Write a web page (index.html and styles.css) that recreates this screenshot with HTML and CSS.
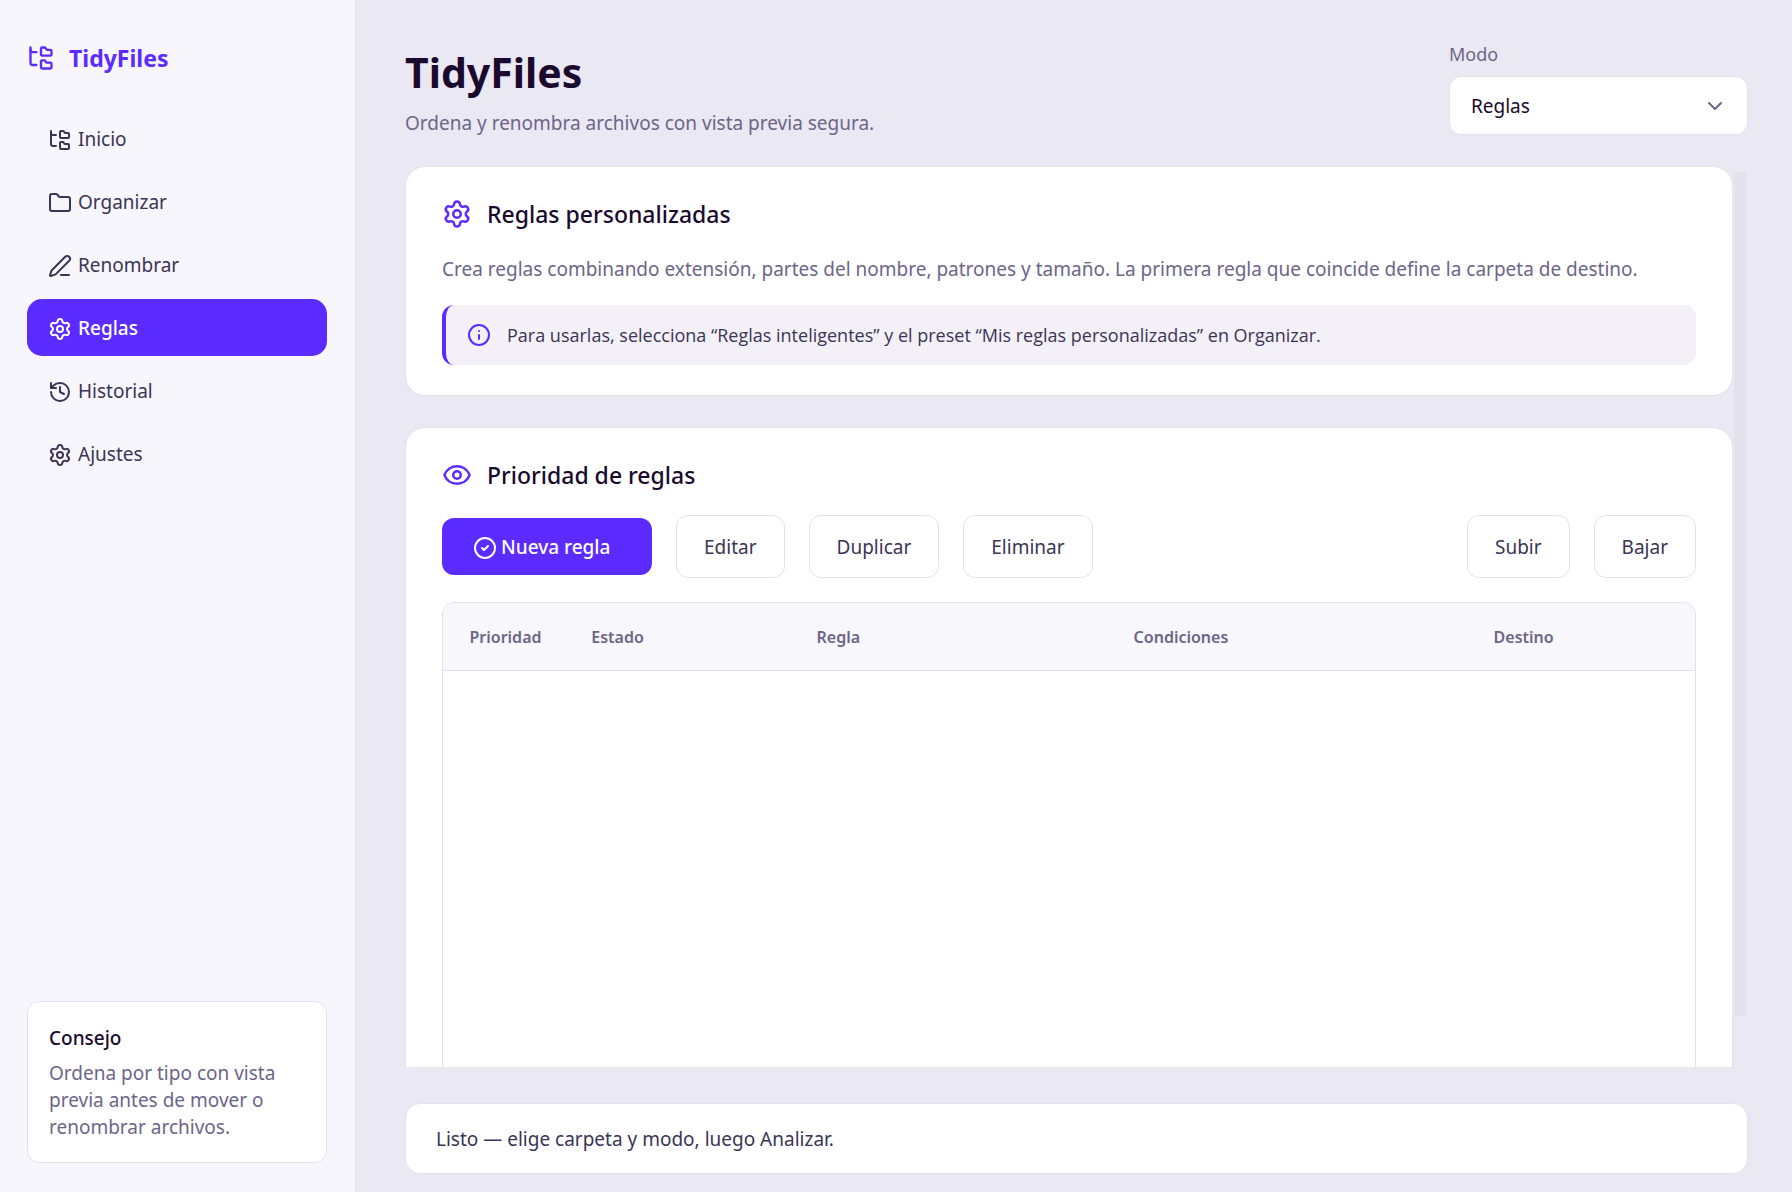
FILE: index.html
```html
<!DOCTYPE html>
<html lang="es">
<head>
<meta charset="utf-8">
<meta name="viewport" content="width=device-width, initial-scale=1">
<title>TidyFiles</title>
<link rel="stylesheet" href="styles.css">
</head>
<body>
<svg class="sprite" aria-hidden="true">
  <symbol id="tree" viewBox="0 0 24 24"><path d="M20 10a1 1 0 0 0 1-1V6a1 1 0 0 0-1-1h-2.5a1 1 0 0 1-.8-.4l-.9-1.2A1 1 0 0 0 15 3h-2a1 1 0 0 0-1 1v5a1 1 0 0 0 1 1Z"/><path d="M20 21a1 1 0 0 0 1-1v-3a1 1 0 0 0-1-1h-2.9a1 1 0 0 1-.88-.55l-.42-.85a1 1 0 0 0-.92-.6H13a1 1 0 0 0-1 1v5a1 1 0 0 0 1 1Z"/><path d="M3 5a2 2 0 0 0 2 2h3"/><path d="M3 3v13a2 2 0 0 0 2 2h3"/></symbol>
  <symbol id="folder" viewBox="0 0 24 24"><path d="M20 20a2 2 0 0 0 2-2V8a2 2 0 0 0-2-2h-7.9a2 2 0 0 1-1.69-.9L9.6 3.9A2 2 0 0 0 7.93 3H4a2 2 0 0 0-2 2v13a2 2 0 0 0 2 2Z"/></symbol>
  <symbol id="pen" viewBox="0 0 24 24"><path d="M13 21h8"/><path d="M21.174 6.812a1 1 0 0 0-3.986-3.987L3.842 16.174a2 2 0 0 0-.5.83l-1.321 4.352a.5.5 0 0 0 .623.622l4.353-1.32a2 2 0 0 0 .83-.497z"/></symbol>
  <symbol id="gear" viewBox="0 0 24 24"><path d="M9.671 4.136a2.34 2.34 0 0 1 4.659 0 2.34 2.34 0 0 0 3.319 1.915 2.34 2.34 0 0 1 2.33 4.033 2.34 2.34 0 0 0 0 3.831 2.34 2.34 0 0 1-2.33 4.033 2.34 2.34 0 0 0-3.319 1.915 2.34 2.34 0 0 1-4.659 0 2.34 2.34 0 0 0-3.32-1.915 2.34 2.34 0 0 1-2.33-4.033 2.34 2.34 0 0 0 0-3.831A2.34 2.34 0 0 1 6.35 6.051a2.34 2.34 0 0 0 3.319-1.915"/><circle cx="12" cy="12" r="3"/></symbol>
  <symbol id="history" viewBox="0 0 24 24"><path d="M3 12a9 9 0 1 0 9-9 9.75 9.75 0 0 0-6.74 2.74L3 8"/><path d="M3 3v5h5"/><path d="M12 7v5l4 2"/></symbol>
  <symbol id="eye" viewBox="0 0 24 24"><path d="M2.062 12.348a1 1 0 0 1 0-.696 10.75 10.75 0 0 1 19.876 0 1 1 0 0 1 0 .696 10.75 10.75 0 0 1-19.876 0"/><circle cx="12" cy="12" r="3"/></symbol>
  <symbol id="info" viewBox="0 0 24 24"><circle cx="12" cy="12" r="10"/><path d="M12 16v-4"/><path d="M12 8h.01"/></symbol>
  <symbol id="check" viewBox="0 0 24 24"><circle cx="12" cy="12" r="10"/><path d="m9 12 2 2 4-4"/></symbol>
  <symbol id="chevron" viewBox="0 0 24 24"><path d="m6 9 6 6 6-6"/></symbol>
</svg>
<div class="app">
  <aside class="sidebar">
    <div class="brand"><svg class="icon icon-brand"><use href="#tree"/></svg>TidyFiles</div>
    <nav class="nav">
      <button class="nav-item" type="button"><svg class="icon"><use href="#tree"/></svg>Inicio</button>
      <button class="nav-item" type="button"><svg class="icon"><use href="#folder"/></svg>Organizar</button>
      <button class="nav-item" type="button"><svg class="icon"><use href="#pen"/></svg>Renombrar</button>
      <button class="nav-item active" type="button" aria-current="page"><svg class="icon"><use href="#gear"/></svg>Reglas</button>
      <button class="nav-item" type="button"><svg class="icon"><use href="#history"/></svg>Historial</button>
      <button class="nav-item" type="button"><svg class="icon"><use href="#gear"/></svg>Ajustes</button>
    </nav>
    <section class="tip">
      <h2 class="tip-title">Consejo</h2>
      <p class="tip-text">Ordena por tipo con vista previa antes de mover o renombrar archivos.</p>
    </section>
  </aside>

  <main class="main">
    <header class="header">
      <div>
        <h1 class="title">TidyFiles</h1>
        <p class="subtitle">Ordena y renombra archivos con vista previa segura.</p>
      </div>
      <div class="mode">
        <label class="mode-label" for="mode">Modo</label>
        <div class="select-wrap">
          <select class="select" id="mode"><option>Reglas</option></select>
          <svg class="icon select-icon"><use href="#chevron"/></svg>
        </div>
      </div>
    </header>

    <div class="viewport">
      <div class="content">
        <section class="card">
          <h2 class="card-title"><svg class="icon icon-title"><use href="#gear"/></svg>Reglas personalizadas</h2>
          <p class="card-text">Crea reglas combinando extensión, partes del nombre, patrones y tamaño. La primera regla que coincide define la carpeta de destino.</p>
          <p class="note"><svg class="icon"><use href="#info"/></svg>Para usarlas, selecciona “Reglas inteligentes” y el preset “Mis reglas personalizadas” en Organizar.</p>
        </section>

        <section class="card">
          <h2 class="card-title"><svg class="icon icon-title"><use href="#eye"/></svg>Prioridad de reglas</h2>
          <div class="toolbar">
            <button class="btn btn-primary" type="button"><svg class="icon"><use href="#check"/></svg>Nueva regla</button>
            <button class="btn" type="button">Editar</button>
            <button class="btn" type="button">Duplicar</button>
            <button class="btn" type="button">Eliminar</button>
            <button class="btn push" type="button">Subir</button>
            <button class="btn" type="button">Bajar</button>
          </div>
          <div class="table-frame">
            <table class="table">
              <thead>
                <tr><th class="col-priority">Prioridad</th><th class="col-state">Estado</th><th>Regla</th><th>Condiciones</th><th>Destino</th></tr>
              </thead>
              <tbody></tbody>
            </table>
          </div>
        </section>
      </div>
      <div class="rail"><div class="thumb"></div></div>
    </div>

    <footer class="status">Listo — elige carpeta y modo, luego Analizar.</footer>
  </main>
</div>
</body>
</html>
```
FILE: styles.css
```css
:root {
  --accent: #5b2bff;
  --page: #eae8f3;
  --side: #f7f6fc;
  --line: #e3e1ee;
  --ink: #1a0a2e;
  --text: #3b3455;
  --muted: #6d6588;
}

* { box-sizing: border-box; }

body {
  margin: 0;
  background: var(--page);
  color: var(--text);
  font: 19px/27px "Noto Sans", "Open Sans", sans-serif;
}

h1, h2, p { margin: 0; }

button, select { font: inherit; color: inherit; }

.sprite { display: none; }

.icon {
  flex: none;
  width: 24px;
  height: 24px;
  fill: none;
  stroke: currentColor;
  stroke-width: 2;
  stroke-linecap: round;
  stroke-linejoin: round;
}

.app { display: flex; height: 100vh; }

/* Sidebar */
.sidebar {
  display: flex;
  flex: none;
  flex-direction: column;
  width: 356px;
  padding: 43px 28px 29px 27px;
  background: var(--side);
  border-right: 1px solid var(--line);
}

.brand {
  display: flex;
  align-items: center;
  gap: 14px;
  color: var(--accent);
  font-size: 23px;
  line-height: 30px;
  font-weight: 700;
}

.icon-brand { width: 28px; height: 28px; }

.nav {
  display: flex;
  flex-direction: column;
  gap: 6px;
  margin-top: 37px;
}

.nav-item {
  display: flex;
  align-items: center;
  gap: 6px;
  height: 57px;
  padding: 2px 21px 0;
  border: 0;
  border-radius: 15px;
  background: none;
}

.nav-item.active {
  background: var(--accent);
  color: #fff;
  font-weight: 500;
}

.tip {
  margin-top: auto;
  padding: 23px 21px 21px;
  border: 1px solid var(--line);
  border-radius: 12px;
  background: #fff;
}

.tip-title {
  margin-bottom: 8px;
  color: var(--ink);
  font-size: 19px;
  font-weight: 500;
}

.tip-text { color: var(--muted); }

/* Main column */
.main {
  display: flex;
  flex: 1;
  flex-direction: column;
  min-width: 0;
  padding: 40px 44px 18px 49px;
}

.header {
  display: flex;
  justify-content: space-between;
  margin-bottom: 29px;
}

.title {
  color: var(--ink);
  font-size: 41px;
  line-height: 64px;
  font-weight: 700;
}

.subtitle { margin-top: 6px; color: var(--muted); }

.mode { width: 299px; }

.mode-label {
  display: block;
  margin-bottom: 7px;
  color: var(--muted);
  font-size: 18px;
  line-height: 29px;
}

.select-wrap { position: relative; }

.select {
  width: 100%;
  height: 59px;
  padding: 2px 52px 0 21px;
  border: 1px solid var(--line);
  border-radius: 12px;
  background: #fff;
  color: var(--ink);
  appearance: none;
}

.select-icon {
  position: absolute;
  top: 18px;
  right: 21px;
  color: var(--muted);
  pointer-events: none;
}

.viewport {
  display: flex;
  flex: 1;
  min-height: 0;
}

.content {
  flex: 1;
  min-width: 0;
  overflow: hidden;
}

.rail { flex: none; width: 15px; padding: 6px 2px 0 1px; }

.thumb { height: calc(100% - 51px); background: var(--line); }

/* Cards */
.card {
  padding: 28px 36px 30px;
  border: 1px solid var(--line);
  border-radius: 20px;
  background: #fff;
}

.card + .card { margin-top: 31px; }

.card-title {
  display: flex;
  align-items: center;
  gap: 15px;
  color: var(--ink);
  font-size: 23px;
  line-height: 38px;
  font-weight: 500;
}

.card-title .icon { color: var(--accent); }

.icon-title { width: 30px; height: 30px; }

.card-text { margin-top: 23px; color: var(--muted); }

.note {
  display: flex;
  align-items: center;
  gap: 16px;
  height: 60px;
  margin-top: 22px;
  padding: 0 21px;
  border-left: 4px solid var(--accent);
  border-radius: 12px;
  background: #f3f0f8;
  font-family: "Open Sans", "Noto Sans", sans-serif;
  font-size: 18px;
}

.note .icon { color: var(--accent); }

.toolbar {
  display: flex;
  align-items: center;
  gap: 24px;
  margin-top: 21px;
}

.btn {
  height: 63px;
  padding: 2px 27px 0;
  border: 1px solid var(--line);
  border-radius: 12px;
  background: #fff;
}

.btn-primary {
  display: flex;
  align-items: center;
  gap: 4px;
  width: 210px;
  height: 57px;
  padding: 2px 31px 0;
  border: 0;
  background: var(--accent);
  color: #fff;
  font-weight: 500;
}

.push { margin-left: auto; }

.table-frame {
  min-height: 560px;
  margin-top: 24px;
  overflow: hidden;
  border: 1px solid var(--line);
  border-radius: 12px;
}

.table {
  width: 100%;
  table-layout: fixed;
  border-collapse: collapse;
}

.table th {
  height: 67px;
  padding: 2px 0 0;
  border-bottom: 1px solid var(--line);
  background: #f8f7fb;
  color: var(--muted);
  font-size: 16px;
  font-weight: 600;
}

.col-priority { width: 125px; }
.col-state { width: 99px; }

.status {
  margin-top: 36px;
  padding: 22px 30px 20px;
  border: 1px solid var(--line);
  border-radius: 15px;
  background: #fff;
}
```
